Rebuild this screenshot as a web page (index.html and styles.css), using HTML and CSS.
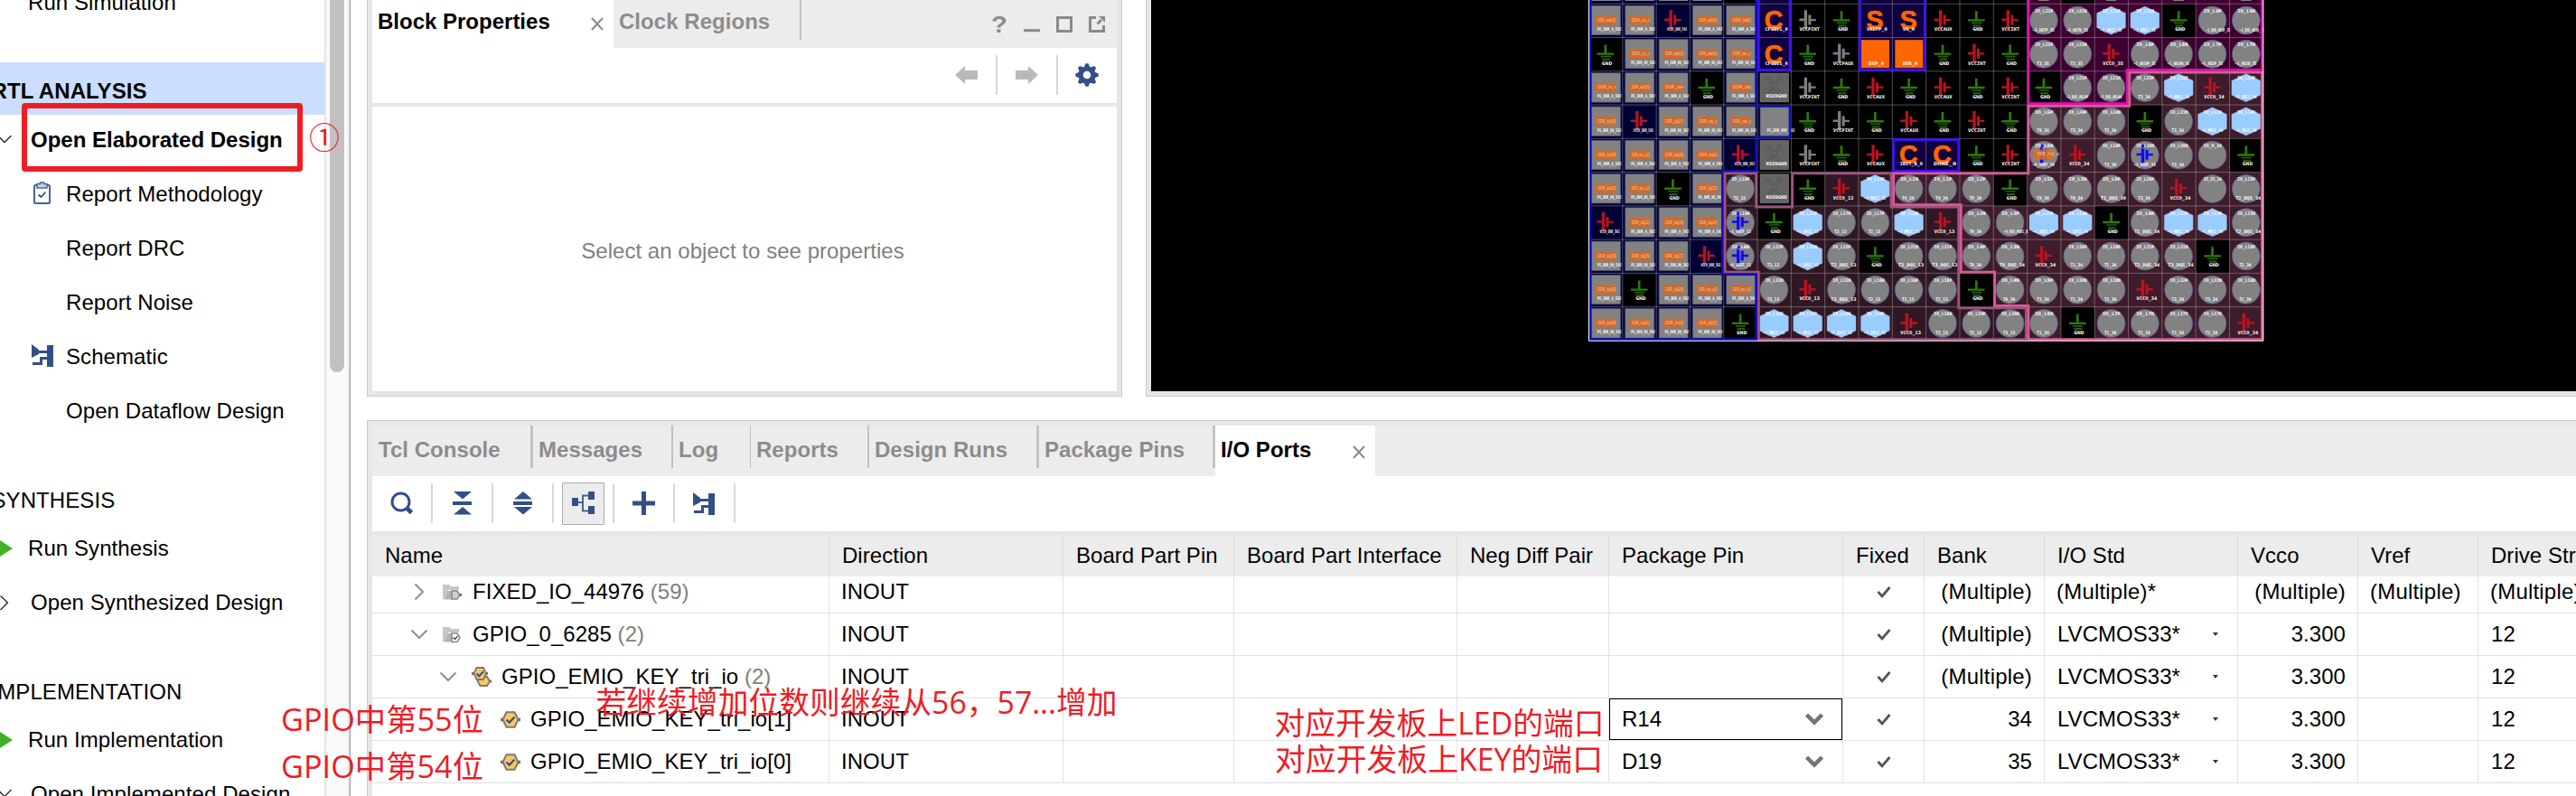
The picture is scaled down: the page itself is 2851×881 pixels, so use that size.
FILE: index.html
```html
<!DOCTYPE html>
<html lang="en">
<head>
<meta charset="utf-8">
<title>I/O Planning</title>
<link rel="stylesheet" href="styles.css">
</head>
<body>
<svg class="defs" width="0" height="0" aria-hidden="true">
  <defs>
    <symbol id="schematic" viewBox="0 0 25 25"><path fill="#334f86" d="M0 0l8 6v1h9v-6h7v24h-7v-8h-5v6H1v-3h8v-6h8v-4H8v1L0 15z"/></symbol>
    <symbol id="down" viewBox="0 0 20 12"><path d="M1.5 1.5l8.500 8.500L18.500 1.500" fill="none" stroke="#8f8f8f" stroke-width="2"/></symbol>
    <symbol id="right" viewBox="0 0 12 20"><path d="M1.500 1.500l8.500 8.500L1.500 18.500" fill="none" stroke="#8f8f8f" stroke-width="2"/></symbol>
    <symbol id="drop" viewBox="0 0 20 14"><path d="M1.500 2l8.500 8.500L18.500 2" fill="none" stroke="#757575" stroke-width="4.500"/></symbol>
    <symbol id="tick" viewBox="0 0 16 13"><path d="M1.500 6l4.500 4.800L14.500 1" fill="none" stroke="#555" stroke-width="2.800"/></symbol>
    <symbol id="close" viewBox="0 0 14 15"><path d="M1 1l12 13M13 1L1 14" fill="none" stroke="#8a8a8a" stroke-width="2"/></symbol>
    <symbol id="port" viewBox="0 0 22 19"><path d="M0 9.500h22" stroke="#707070" stroke-width="3.500"/><path d="M6.500 1.200h9l4 8.300-4 8.300h-9l-4-8.300z" fill="#fcc566" stroke="#7a7a72" stroke-width="2"/><path d="M6.500 9.500l3.200 3.200 5.600-6" fill="none" stroke="#334f86" stroke-width="2.200"/></symbol>
    <symbol id="bus" viewBox="0 0 22 22"><path d="M8 16h14" stroke="#707070" stroke-width="3"/><path d="M9.500 11h7.500l3 5-3 5h-7.500l-3-5z" fill="#fcc566" stroke="#7a7a72" stroke-width="1.800"/><path d="M0 7.500h18" stroke="#707070" stroke-width="3"/><path d="M5.500 1h7.500l3 6.500-3 6.500H5.500l-3-6.500z" fill="#fcc566" stroke="#7a7a72" stroke-width="1.800"/><path d="M5.500 7.500l2.800 2.800 4.700-5" fill="none" stroke="#334f86" stroke-width="2"/></symbol>
    <symbol id="folder" viewBox="0 0 21 19"><path d="M0 17V1h7l2 2h9v4H6v10z" fill="#c6c6c6"/><path d="M2 17.500L6 8h4v9.500z" fill="#b4b4b4"/></symbol>
  </defs>
</svg>

<div class="app">
  <nav class="flow">
    <div class="flow-list">
      <div class="step first">Run Simulation</div>
      <div class="stage active">RTL ANALYSIS</div>
      <div class="step open-top"><svg class="ic14" viewBox="0 0 14 10"><path d="M-2 .5l7 7 7.500-7.500" fill="none" stroke="#222" stroke-width="1.300"/></svg><b>Open Elaborated Design</b></div>
      <div class="step sub"><svg class="ic26" viewBox="0 0 26 26"><rect x="4" y="4" width="17" height="20" rx="1" fill="none" stroke="#4a6396" stroke-width="2"/><path d="M7 2.500h3.500V1h4v1.500H18V7H7z" fill="#c9d2e3" stroke="#4a6396" stroke-width="1.500"/><path d="M8.500 14.500l3 2.500 5-5.500" fill="none" stroke="#334f86" stroke-width="1.800"/></svg>Report Methodology</div>
      <div class="step sub"><span class="ic26"></span>Report DRC</div>
      <div class="step sub"><span class="ic26"></span>Report Noise</div>
      <div class="step sub"><svg class="ic26 sch"><use href="#schematic" x="1" y="0" width="25" height="25"/></svg>Schematic</div>
      <div class="step sub"><span class="ic26"></span>Open Dataflow Design</div>
      <div class="stage">SYNTHESIS</div>
      <div class="step run"><svg class="ic14 tall" viewBox="0 0 14 26"><path d="M-4 1.500L14 13-4 24.500z" fill="#43b02a"/></svg>Run Synthesis</div>
      <div class="step open"><svg class="ic14 tall" viewBox="0 0 14 18"><path d="M.5 1.500L8.500 9l-8 8" fill="none" stroke="#222" stroke-width="1.300"/></svg>Open Synthesized Design</div>
      <div class="stage">IMPLEMENTATION</div>
      <div class="step run"><svg class="ic14 tall" viewBox="0 0 14 26"><path d="M-4 1.500L14 13-4 24.500z" fill="#43b02a"/></svg>Run Implementation</div>
      <div class="step open"><svg class="ic14" viewBox="0 0 14 10"><path d="M-2 .5l7 7 7.500-7.500" fill="none" stroke="#222" stroke-width="1.300"/></svg>Open Implemented Design</div>
    </div>
    <div class="flow-scroll"><div class="thumb"></div></div>
  </nav>

  <main class="work">
    <div class="upper">
      <section class="panel props">
        <div class="tabs">
          <div class="tab on">Block Properties<svg width="14" height="15"><use href="#close"/></svg></div>
          <div class="tab">Clock Regions</div>
          <div class="win">
            <span class="help">?</span>
            <svg width="18" height="18"><path d="M0 15.700h18" stroke="#8a8a8a" stroke-width="3"/></svg>
            <svg width="18" height="18"><rect x="1.500" y="1.500" width="15" height="15" fill="none" stroke="#8a8a8a" stroke-width="3"/></svg>
            <svg width="18" height="18"><path d="M8 1.500H1.500v15h15V10" fill="none" stroke="#8a8a8a" stroke-width="3"/><path d="M9.500 8.500L14 4" stroke="#8a8a8a" stroke-width="3"/><path d="M11 0h7v7z" fill="#8a8a8a"/></svg>
          </div>
        </div>
        <div class="bar">
          <div class="tool"><svg width="26" height="20"><path d="M0 10L11 0v5h14v10H11v5z" fill="#b9b9b9"/></svg></div>
          <div class="tool"><svg width="26" height="20"><path d="M25 10L14 0v5H0v10h14v5z" fill="#b9b9b9"/></svg></div>
          <div class="tool last"><svg width="26" height="26" viewBox="-13 -13 26 26"><g fill="#334f86"><circle r="9.500"/><g id="cog"><path d="M-3.500-8L-1.500-12.700h3L3.500-8zM-3.500 8l2 4.700h3L3.500 8zM-8-3.500l-4.700 2v3L-8 3.500zM8-3.500l4.700 2v3L8 3.500z"/></g><use href="#cog" transform="rotate(45)"/></g><circle r="4.300" fill="#fff"/></svg></div>
        </div>
        <div class="empty">Select an object to see properties</div>
      </section>
      <section class="panel device"><svg id="package" width="1577" height="433"></svg></section>
    </div>

    <section class="panel ports">
      <div class="tabs">
        <div class="tab t1">Tcl Console</div>
        <div class="tab t2">Messages</div>
        <div class="tab t3">Log</div>
        <div class="tab t4">Reports</div>
        <div class="tab t5">Design Runs</div>
        <div class="tab t6">Package Pins</div>
        <div class="tab on t7">I/O Ports<svg width="14" height="15"><use href="#close"/></svg></div>
      </div>
      <div class="bar">
        <div class="tool"><svg width="26" height="26"><circle cx="11.500" cy="11.500" r="9.500" fill="none" stroke="#334f86" stroke-width="3"/><path d="M18.500 18.500l5 5" stroke="#334f86" stroke-width="5"/></svg></div>
        <div class="tool"><svg width="22" height="26"><path d="M1 0h20L11 8.500zM0 11h21v4H0zM1 25.500h20L11 17z" fill="#334f86"/></svg></div>
        <div class="tool"><svg width="22" height="26"><path d="M1 8.500h20L11 0zM0 11h21v4H0zM1 17h20L11 25.500z" fill="#334f86"/></svg></div>
        <div class="tool"><span class="pressed"><svg width="25" height="26"><path d="M7 12h6M18 4.500h-6v17h6" fill="none" stroke="#4a6396" stroke-width="2"/><path d="M0 7h7v9H0zM18 0h7v9h-7zM18 16h7v9h-7z" fill="#334f86"/></svg></span></div>
        <div class="tool"><svg width="25" height="26"><path d="M10 0h5v10.500h10v5H15V26h-5V15.500H0v-5h10z" fill="#334f86"/></svg></div>
        <div class="tool"><svg width="25" height="25"><use href="#schematic"/></svg></div>
      </div>
      <div class="grid head">
        <div>Name</div><div>Direction</div><div>Board Part Pin</div><div>Board Part Interface</div><div>Neg Diff Pair</div><div>Package Pin</div><div>Fixed</div><div>Bank</div><div>I/O Std</div><div>Vcco</div><div>Vref</div><div>Drive Strength</div>
      </div>
      <div class="grid row cut">
        <div class="name l1"><span class="tw"><svg width="12" height="20"><use href="#right"/></svg></span><svg class="ic" width="21" height="19"><use href="#folder"/><path d="M10 8h6l3 4.500-3 4.500h-6z" fill="#cfcfcf" stroke="#888" stroke-width="1.500"/><path d="M18 12.500h3" stroke="#777" stroke-width="3"/></svg>FIXED_IO_44976&nbsp;<i>(59)</i></div><div>INOUT</div><div></div><div></div><div></div><div></div><div class="fix"><svg width="16" height="13"><use href="#tick"/></svg></div><div class="num multi">(Multiple)</div><div class="multi">(Multiple)*</div><div class="num multi">(Multiple)</div><div class="multi">(Multiple)</div><div class="multi">(Multiple)*</div>
      </div>
      <div class="grid row">
        <div class="name l1"><span class="tw"><svg width="20" height="12"><use href="#down"/></svg></span><svg class="ic" width="21" height="19"><use href="#folder"/><path d="M10 8h6l3 4.500-3 5h-6z" fill="#fff" stroke="#888" stroke-width="1.500"/><path d="M11.500 12.500l2 2 3-3.500" fill="none" stroke="#334f86" stroke-width="1.500"/></svg>GPIO_0_6285&nbsp;<i>(2)</i></div><div>INOUT</div><div></div><div></div><div></div><div></div><div class="fix"><svg width="16" height="13"><use href="#tick"/></svg></div><div class="num multi">(Multiple)</div><div>LVCMOS33*<span class="caret"></span></div><div class="num">3.300</div><div></div><div>12</div>
      </div>
      <div class="grid row">
        <div class="name l2"><span class="tw"><svg width="20" height="12"><use href="#down"/></svg></span><svg class="ic" width="22" height="22"><use href="#bus"/></svg>GPIO_EMIO_KEY_tri_io&nbsp;<i>(2)</i></div><div>INOUT</div><div></div><div></div><div></div><div></div><div class="fix"><svg width="16" height="13"><use href="#tick"/></svg></div><div class="num multi">(Multiple)</div><div>LVCMOS33*<span class="caret"></span></div><div class="num">3.300</div><div></div><div>12</div>
      </div>
      <div class="grid row">
        <div class="name l3"><svg class="ic" width="22" height="19"><use href="#port"/></svg>GPIO_EMIO_KEY_tri_io[1]</div><div>INOUT</div><div></div><div></div><div></div><div class="pin focus">R14<svg width="20" height="14"><use href="#drop"/></svg></div><div class="fix"><svg width="16" height="13"><use href="#tick"/></svg></div><div class="num">34</div><div>LVCMOS33*<span class="caret"></span></div><div class="num">3.300</div><div></div><div>12</div>
      </div>
      <div class="grid row">
        <div class="name l3"><svg class="ic" width="22" height="19"><use href="#port"/></svg>GPIO_EMIO_KEY_tri_io[0]</div><div>INOUT</div><div></div><div></div><div></div><div class="pin">D19<svg width="20" height="14"><use href="#drop"/></svg></div><div class="fix"><svg width="16" height="13"><use href="#tick"/></svg></div><div class="num">35</div><div>LVCMOS33*<span class="caret"></span></div><div class="num">3.300</div><div></div><div>12</div>
      </div>
    </section>
  </main>
</div>

<svg class="notes" width="2851" height="881">
  <rect x="27" y="117" width="305" height="70" rx="1" fill="none" stroke="#ef1c24" stroke-width="6"/>
  <text x="342" y="164.500" textLength="34" lengthAdjust="spacingAndGlyphs">①</text>
  <text x="311" y="808.500" textLength="224" lengthAdjust="spacingAndGlyphs">GPIO中第55位</text>
  <text x="311" y="860.500" textLength="224" lengthAdjust="spacingAndGlyphs">GPIO中第54位</text>
  <text x="659.500" y="789.500" textLength="577" lengthAdjust="spacingAndGlyphs">若继续增加位数则继续从56，57...增加</text>
  <text x="1410.500" y="812.500" textLength="365" lengthAdjust="spacingAndGlyphs">对应开发板上LED的端口</text>
  <text x="1411" y="852.500" textLength="363" lengthAdjust="spacingAndGlyphs">对应开发板上KEY的端口</text>
</svg>
<script src="package.js"></script>
</body>
</html>
```

FILE: styles.css
```css
* { box-sizing: border-box; }
body {
  margin: 0;
  width: 2851px;
  height: 881px;
  overflow: hidden;
  background: #fff;
  color: #000;
  font: 24px/28px "Liberation Sans", Arial, sans-serif;
  letter-spacing: .04px;
}
svg { display: block; flex: none; }
.defs { position: absolute; }
.app { display: flex; width: 2851px; height: 881px; overflow: hidden; }

/* flow navigator */
.flow { display: flex; flex: none; width: 388px; border-right: 1px solid #999; overflow: hidden; }
.flow-list { width: 359px; overflow: hidden; white-space: nowrap; letter-spacing: .08px; }
.flow-scroll { width: 28px; padding-left: 4px; background: #fafafa; border-left: 2px solid #e6e6e6; border-right: 2px solid #e6e6e6; }
.thumb { width: 16px; height: 412px; background: #c1c1c1; border-radius: 0 0 8px 8px; }
.step { display: flex; align-items: center; height: 60px; padding-top: 2px; }
.step.first { height: 6px; padding-left: 31px; padding-top: 0; }
.stage { display: flex; align-items: center; height: 58px; margin-top: 38px; padding-top: 5px; text-indent: -9.5px; }
.stage.active { margin-top: 63px; background: #ccdefe; font-weight: bold; }
.step.open-top { height: 57px; padding-bottom: 3px; gap: 20px; letter-spacing: 0; }
.step.sub { padding-left: 34px; gap: 13px; }
.step.run { height: 56px; padding-bottom: 4px; gap: 17px; }
.step.open { gap: 20px; }
.ic14 { width: 14px; height: 10px; flex: none; overflow: hidden; }
.ic14.tall { height: 26px; }
.step.open .tall { height: 18px; }
.ic26 { width: 26px; height: 26px; margin-top: -3px; flex: none; }

/* panels */
.work { flex: none; width: 2445px; margin-left: 18px; }
.upper { display: flex; gap: 26px; height: 439px; }
.panel { border: 1px solid #cbcbcb; background: #e6e6e6; overflow: hidden; }
.props { flex: none; width: 836px; border-top: 0; padding: 0 5px 5px; }
.device { flex: none; width: 1583px; border-top: 0; border-right: 0; padding: 0 0 5px 5px; }
.device svg { background: #000; }
.ports { width: 2445px; height: 416px; margin-top: 26px; border-right: 0; border-bottom: 0; padding: 5px 0 0 5px; }

.tabs { display: flex; background: #ececec; color: #8c8c8c; font-weight: bold; white-space: nowrap; }
.tab.on { background: #fff; color: #000; display: flex; justify-content: space-between; }
.props .tabs { height: 53px; }
.props .tab { width: 208px; height: 44px; padding: 10px 0 0 6px; border-right: 2px solid #c2c2c2; }
.props .tab.on { width: 267px; height: 53px; padding: 10px 11px 0 6px; border: 0; letter-spacing: 0; }
.tab svg { margin-top: 9px; }
.win { display: flex; gap: 18px; margin-left: auto; padding: 18px 13px 0 0; }
.help { width: 18px; margin-top: -4px; font-size: 26px; line-height: 26px; text-align: center; transform: scaleX(1.12); }

.ports .tabs { height: 56px; }
.ports .tab { height: 47px; padding: 13px 0 0 7px; border-right: 3px solid #c2c2c2; }
.ports .t1 { width: 178px; }
.ports .t2 { width: 155px; padding-left: 6px; border-right-width: 2px; }
.ports .t3 { width: 86px; padding-left: 6px; border-right-width: 1px; }
.ports .t4 { width: 131px; padding-left: 6px; border-right-width: 2px; }
.ports .t5 { width: 188px; padding-left: 6px; }
.ports .t6 { width: 195px; padding-left: 6px; }
.ports .t7 { width: 177px; height: 56px; padding: 13px 11px 0 6px; border: 0; }

.bar { display: flex; background: #fff; height: 61px; padding-top: 8px; }
.tool { display: flex; align-items: center; justify-content: center; width: 67px; height: 44px; border-right: 2px solid #d8d8d8; }
.props .bar { justify-content: flex-end; }
.props .last { width: 65px; padding: 0 1px 0 0; border: 0; }
.pressed { display: flex; flex: none; align-items: center; justify-content: center; width: 47px; height: 47px; border: 1px solid #a9a9a9; border-radius: 1px; background: #ececec; }
.ports .bar { margin-bottom: 4px; }
.empty { display: flex; align-items: center; justify-content: center; height: 315px; margin-top: 4px; padding: 5px 4px 0 0; background: #fff; color: #808080; }

/* table */
.grid { display: grid; grid-template-columns: 506px 259px 189px 247px 168px 259px 90px 133px 214px 133px 133px 200px; white-space: nowrap; background: #fff; }
.grid > div { display: flex; align-items: center; padding: 0 13px 0 14px; border-right: 1px solid #e3e3e3; overflow: hidden; }
.head { height: 46px; background: #ececec; }
.head > div { border-right-color: #dcdcdc; }
.row { height: 47px; }
.row > div { border-bottom: 1px solid #e0e0e0; }
.row.cut { height: 41px; }
.row.cut > div { padding-bottom: 6px; }
.row > div:nth-child(2) { padding-left: 13px; }
.row:last-child { box-shadow: 0 20px 0 #fff; }
.row i { font-style: normal; color: #808080; }
.row .num { justify-content: flex-end; }
.row .multi { letter-spacing: .2px; padding-left: 13px; padding-right: 13px; }
.row .fix { justify-content: center; padding-left: 12px; padding-right: 12px; }
.row .l1 { padding-left: 40px; }
.row .l2 { padding-left: 72px; }
.row .l3 { padding-left: 142px; }
.tw { display: flex; align-items: center; justify-content: center; width: 24px; margin-right: 14px; flex: none; }
.name .ic { margin-right: 12px; }
.l2 .ic, .l3 .ic { margin-right: 11px; }
.row .pin { justify-content: space-between; padding-right: 21px; }
.pin.focus { box-shadow: inset 0 0 0 1px #000; }
.caret { margin-left: auto; margin-right: 8px; border: 3.5px solid transparent; border-top: 4px solid #333; border-bottom: 0; }

/* red pen notes lie over the window */
.notes { position: absolute; left: 0; top: 0; }
.notes text { font: 34px "Open Sans", "Noto Sans CJK SC", sans-serif; fill: #ee1c25; }

/* package drawing */
.pk-s { font: bold 15px "DejaVu Sans Mono", monospace; fill: #fff; }
.pk-d { font: 14px "Liberation Sans", sans-serif; fill: #f3c9a8; }
.pk-l { font: bold 86px "Liberation Sans", sans-serif; fill: #ff6600; stroke: #ff6600; stroke-width: 2; text-anchor: middle; }
.pk-x { font: 84px "Liberation Sans", sans-serif; fill: #6a6a6a; stroke: #4f4f4f; stroke-width: 2; text-anchor: middle; }
```

FILE: package.js
```js
// Package view: one letter per ball for its kind, one for its bank.
const kinds = [
  'DDRDDCgGSSRGRcchhGcc',
  'GDDDDCGgOOGRGccRcccc',
  'DDDGDXgGRGRGRGccchRh',
  'DRDDDqGgGRGRGcccGchh',
  'DDDDRXgGRCCGRwRcvccG',
  'DDGDcXGRhcccGccccRcc',
  'RDDDvGhcchRcchhGchhc',
  'DDDRvchcGccccRccccGc',
  'DGDDDcRccccGccccRccc',
  'DDDDGhhhhRccccGccccR'
];
const banks = [
  'nnnnnk..kk...mmmmmmm',
  'nnnnnk..kk...mmmmmmm',
  'nnnnn........mmmpppp',
  'nnnnnn.......ppppppp',
  'nnnnn....kk..ppppppp',
  'nnnnb.bbbppppppppppp',
  'nnnnbbbbbbbppppppppp',
  'nnnnbbbbbbbppppppppp',
  'nnnnnbbbbbb.pppppppp',
  'nnnnnbbbbbbbbppppppp'
];
const fills = { n: '#000033', k: '#10003f', m: '#3d0030', p: '#3f1c2b', b: '#2f1824', '.': '#000' };
const edges = { n: '#1010b4', k: '#3a10f5', m: '#dd12b0', p: '#d85c96', b: '#a0527f' };

const labels = {
  '0': { 6: 'VCCPINT', 8: 'VREFP_0', 9: 'VN_0', 5: 'CFGBVS_0', 10: 'VCCAUX', 12: 'VCCINT', 13: 'L22P ~3_AD7P_35', 14: 'L22N ~3_AD7N_35', 15: 'L11P ~1_SRCC_35', 16: 'L11N ~1_SRCC_35', 18: 'L9P ~1_DQS_AD3P_35', 19: 'L9N ~1_DQS_AD3N_35' },
  '1': { 5: 'CFGBVS_0', 7: 'VCCPAUX', 8: 'DXP_0', 9: 'DXN_0', 11: 'VCCINT', 13: 'L23P T3_35', 14: 'L23N T3_35', 15: 'VCCO_35', 16: 'L8P ~1_AD10P_35', 17: 'L8N ~1_AD10N_35', 18: 'L7P ~1_AD2P_35', 19: 'L7N ~1_AD2N_35' },
  '2': { 6: 'VCCPINT', 8: 'VCCAUX', 10: 'VCCAUX', 12: 'VCCINT', 14: 'L21P ~3_DQS_AD14P', 15: 'L21N ~3_DQS_AD14N', 16: 'L23P T3_34', 17: 'L13P ~2_MRCC_34', 18: 'VCCO_34', 19: 'L14P ~2_SRCC_34' },
  '3': { 7: 'VCCPINT', 9: 'VCCAUX', 11: 'VCCINT', 13: 'L6P T0_34', 14: 'L24P T3_34', 15: 'L24N T3_34', 17: 'L23N T3_34', 18: 'L13N ~2_MRCC_34', 19: 'L14N ~2_SRCC_34' },
  '4': { 6: 'VCCPINT', 8: 'VCCAUX', 9: 'INIT_B_0', 10: 'DONE_0', 12: 'VCCINT', 13: 'L6N ~0_VREF_34', 14: 'VCCO_34', 15: 'L19P T3_34', 16: 'L19N ~3_VREF_34', 17: 'L20N T3_34', 18: '0_34' },
  '5': { 4: 'L19P T3_13', 7: 'VCCO_13', 8: 'L13P ~2_MRCC_13', 9: 'L1N T0_34', 10: 'L1P T0_34', 11: 'L2P T0_34', 13: 'L5P T0_34', 14: 'L5N T0_34', 15: 'L9P T1_DQS_34', 16: 'L20P T3_34', 17: 'VCCO_34', 18: '25_34', 19: 'L15P T2_DQS_34' },
  '6': { 4: 'L19N ~3_VREF_13', 6: 'L11P ~1_SRCC_13', 7: 'L17N T2_13', 8: 'L17P T2_13', 9: 'L13N ~2_MRCC_13', 10: 'VCCO_13', 11: 'L2N T0_34', 12: 'L3P ~0_DQS_PUDC_B', 13: 'L11P ~1_SRCC_34', 14: 'L11N ~1_SRCC_34', 16: 'L9N T1_DQS_34', 17: 'L12P ~1_MRCC_34', 18: 'L12N ~1_MRCC_34', 19: 'L15N T2_DQS_34' },
  '7': { 4: 'L6N ~0_VREF_13', 5: 'L22P T3_13', 6: 'L11N ~1_SRCC_13', 7: 'L15P T2_DQS_13', 9: 'L21N T3_DQS_13', 10: 'L21P T3_DQS_13', 11: 'L4P T0_34', 12: 'L3N T0_DQS_34', 13: 'VCCO_34', 14: 'L16P T1_34', 15: 'L18P T2_34', 16: 'L21P T3_DQS_34', 17: 'L21N T3_DQS_34', 19: 'L16P T2_34' },
  '8': { 5: 'L22N T3_13', 6: 'VCCO_13', 7: 'L15N T2_DQS_13', 8: 'L16N T2_13', 9: 'L16P T2_13', 10: 'L18P T2_13', 12: 'L4N T0_34', 13: 'L8P T1_34', 14: 'L10N T1_34', 15: 'L18N T2_34', 16: 'VCCO_34', 17: 'L22P T3_34', 18: 'L22N T3_34', 19: 'L16N T2_34' },
  '9': { 5: 'L12N ~1_MRCC_13', 6: 'L12P ~1_MRCC_13', 7: 'L14N ~2_SRCC_13', 8: 'L14P ~2_SRCC_13', 9: 'VCCO_13', 10: 'L18N T2_13', 11: 'L20P T3_13', 12: 'L20N T3_13', 13: 'L8N T1_34', 15: 'L7P T1_34', 16: 'L7N T1_34', 17: 'L17P T2_34', 18: 'L17N T2_34', 19: 'VCCO_34' }
};
const ddr = [
  ['DDR_addr[5]', 'DDR_ck_p', '', 'DDR_addr[6]', 'DDR_ba[0]'],
  ['', 'DDR_ck_n', 'DDR_addr[2]', 'DDR_addr[3]', 'DDR_we_n'],
  ['DDR_cs_n', 'DDR_addr[0]', 'DDR_cke', '', 'DDR_odt'],
  ['DDR_dq[19]', '', 'DDR_dq[17]', 'DDR_ras_n', 'DDR_cas_n'],
  ['DDR_dq[18]', 'DDR_dqs_p[2]', 'DDR_dq[16]', 'DDR_ba[1]', ''],
  ['DDR_dq[20]', 'DDR_dqs_n[2]', '', 'DDR_dq[22]'],
  ['', 'DDR_dq[21]', 'DDR_dq[23]', 'DDR_dq[24]'],
  ['DDR_dq[25]', 'DDR_dq[26]', 'DDR_dq[27]', ''],
  ['DDR_dq[28]', '', 'DDR_dq[29]', 'DDR_dqs_p[3]', 'DDR_dqs_n[3]'],
  ['DDR_dq[30]', 'DDR_dq[31]', 'DDR_dm[3]', 'DDR_dq[15]', '']
];

const W = 111.95, H = 111.8, X0 = 55.5, Y0 = 12.8;
const rect = (x, y, w, h, f, extra = '') => `<rect x="${x}" y="${y}" width="${w}" height="${h}" fill="${f}" ${extra}/>`;
const fit = (x, y, w, s, cls = 'pk-s') => `<text class="${cls}" x="${x}" y="${y}" textLength="${w}" lengthAdjust="spacingAndGlyphs">${s}</text>`;
const vcc = c => `<path fill="${c}" d="M43 21h10v63H43V57H27v-8h16zM57 37h9v13h16v7H66v13h-9z"/>`;
const ground = '<path fill="#2f7a0a" d="M51 24h8v27h24v7H27v-7h24z"/><path fill="#25600c" d="M39 61h34v5H39zM44 70h26v6H44z"/>';
const box = rect(9, 6, 96, 97, '#828282', 'stroke="#55557f" stroke-width="2"');

function ball(kind, r, c) {
  const name = (labels[r] || {})[c] || '';
  const [top, low = ''] = name.split(' ');
  const lower = () => {
    if (!low) return '';
    if (low.length > 12) return fit(34, 91, 80, low);
    if (low.startsWith('~')) return fit(18, 91, 72, low);
    return low.length > 5 ? fit(20, 91, 84, low) : fit(32, 91, 40, low);
  };
  const io = () => fit(26, 29, 60, 'IO_' + top) + lower();
  const tag = s => s ? fit(s.length > 5 ? 27 : 34, 90, Math.min(68, s.length * 10), s) : '';
  const disc = '<circle cx="55" cy="55" r="46.5" fill="#828282" stroke="#56569a" stroke-width="2"/>';
  switch (kind) {
    case 'G': return ground + fit(43, 90, 34, 'GND');
    case 'R': return vcc('#b8141e') + (c < 5 ? fit(36, 89, 66, 'VCCO_DDR_502') : tag(name));
    case 'g': return vcc('#7e7e7e') + tag(name);
    case 'D': return box + rect(22, 39, 66, 31, '#d06a2a') +
      fit(30, 59, 60, ddr[r][c], 'pk-d') + fit(28, 89, 80, r % 2 ? 'PS_DDR_DQ_502' : 'PS_DDR_A_502');
    case 'q': return box + fit(32, 89, 92, 'PS_DDR_VRP_502');
    case 'X': return rect(9, 7, 94, 95, '#646464', 'stroke="#858585" stroke-width="2"') + '<text class="pk-x" x="55" y="80">X</text>' + fit(28, 89, 70, 'RSVDGND');
    case 'C': return '<text class="pk-l" x="54" y="84">C</text>' + fit(25, 90, 76, name);
    case 'S': return '<text class="pk-l" x="54" y="82">S</text>' + tag(name);
    case 'O': return rect(9, 8, 93, 93, '#ff6600') + tag(name);
    case 'h': return '<path d="M55 8l48 23v48l-48 23L7 79V31z" fill="#99ccff" stroke="#c98aa0" stroke-width="1"/>' + io();
    case 'c': return disc + io();
    case 'v': return disc + vcc('#0a0aff') + io();
    case 'w': return disc + vcc('#0a0aff') + rect(22, 37, 66, 33, '#e07020', 'opacity=".85"') + fit(33, 57, 74, 'DDR_vref_io', 'pk-d') + io();
  }
  return '';
}

let tiles = '', lines = '', balls = '', rims = '';
const bank = (r, c) => (banks[Math.max(r, 0)] || '')[c] || ' ';
for (let r = -1; r < 10; r++) {
  for (let c = 0; c < 20; c++) {
    const x = X0 + c * W, y = Y0 + r * H, b = bank(r, c);
    const kind = r < 0 ? 'DDDDGC..SSGRGcGcRcRcc'[c] : kinds[r][c];
    tiles += rect(x, y, W + 1, H + 1, kind === 'G' || kind === 'X' ? '#000' : fills[b]);
    lines += `<path d="M${x} ${y}h${W}v${H}"/>`;
    if (r >= 0) balls += `<g transform="translate(${x} ${y})">${ball(kind, r, c)}</g>`;
    else if (kind === 'D') balls += rect(x + 9, 0, 96, 3, '#828282');
    else if (kind === 'c') balls += rect(x + 38, 0, 34, 3, '#828282');
    if (edges[b]) {
      const up = r >= 0 && bank(r - 1, c) !== b, down = bank(r + 1, c) !== b;
      const left = bank(r, c - 1) !== b, side = bank(r, c + 1) !== b;
      let d = '';
      if (up) d += `M${x + 4} ${y + 4}H${x + W - 4}`;
      if (down) d += `M${x + 4} ${y + H - 4}H${x + W - 4}`;
      if (left) d += `M${x + 4} ${y + 4}V${y + H - 4}`;
      if (side) d += `M${x + W - 4} ${y + 4}V${y + H - 4}`;
      // inner corners of the outline
      for (const [i, j] of [[-1, -1], [-1, 1], [1, -1], [1, 1]]) {
        if (r + i >= 0 && bank(r + i, c) === b && bank(r, c + j) === b && bank(r + i, c + j) !== b)
          d += `M${j < 0 ? x + 4 : x + W - 4} ${i < 0 ? y + 4 : y + H - 4}h.1`;
      }
      rims += `<path d="${d}" fill="none" stroke="${edges[b]}" stroke-width="8.200" stroke-linecap="square"/>`;
    }
  }
}
const right = X0 + 20 * W, bottom = Y0 + 10 * H;
document.getElementById('package').innerHTML =
  `<g transform="translate(466 0) scale(.33333)">${tiles}<g fill="none" stroke="#fff" stroke-opacity=".3" stroke-width="3">${lines}</g>${balls}${rims}` +
  `<path d="M${X0} 0V${bottom + 1}H${right}V0" fill="none" stroke="#fff" stroke-width="3"/></g>`;
```
